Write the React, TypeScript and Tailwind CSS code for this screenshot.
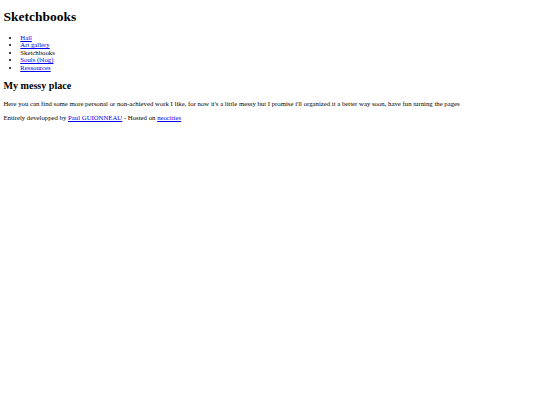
import React from 'react';

const navItems = [
  { label: 'Hall', href: '#', current: false },
  { label: 'Art gallery', href: '#', current: false },
  { label: 'Sketchbooks', href: '', current: true },
  { label: 'Souls (blog)', href: '#', current: false },
  { label: 'Ressources', href: '#', current: false },
];

export default function App() {
  return (
    <div className="min-h-screen bg-white text-black font-['Liberation_Serif','Times_New_Roman',serif] text-[6.75px] leading-[7.6px] px-[3.4px] pt-px">
      <h1 className="text-[13.5px] font-bold mt-[8.05px] mb-[9.05px] leading-[15.5px]">
        Sketchbooks
      </h1>

      {/* Navigation */}
      <ul className="list-disc pl-[16.9px] my-[6.75px]">
        {navItems.map((item) =>
        <li key={item.label}>
            {item.current ?
          <span>{item.label}</span> :

          <a href={item.href} className="text-[#0000ee] underline">
                {item.label}
              </a>
          }
          </li>
        )}
      </ul>

      <h2 className="text-[10.125px] font-bold mt-[8.4px] mb-[8.4px] leading-[11.6px]">
        My messy place
      </h2>
      <p className="my-[6.75px]">
        Here you can find some more personal or non-achieved work I like, for now it's a little messy but I promise i'll organized it a better way soon, have fun turning the pages
      </p>

      <p className="my-[6.75px]">
        Entirely developped by{' '}
        <a href="#" className="text-[#0000ee] underline">
          Paul GUIONNEAU
        </a>{' '}
        - Hosted on{' '}
        <a href="#" className="text-[#0000ee] underline">
          neocities
        </a>
      </p>
    </div>);

}
